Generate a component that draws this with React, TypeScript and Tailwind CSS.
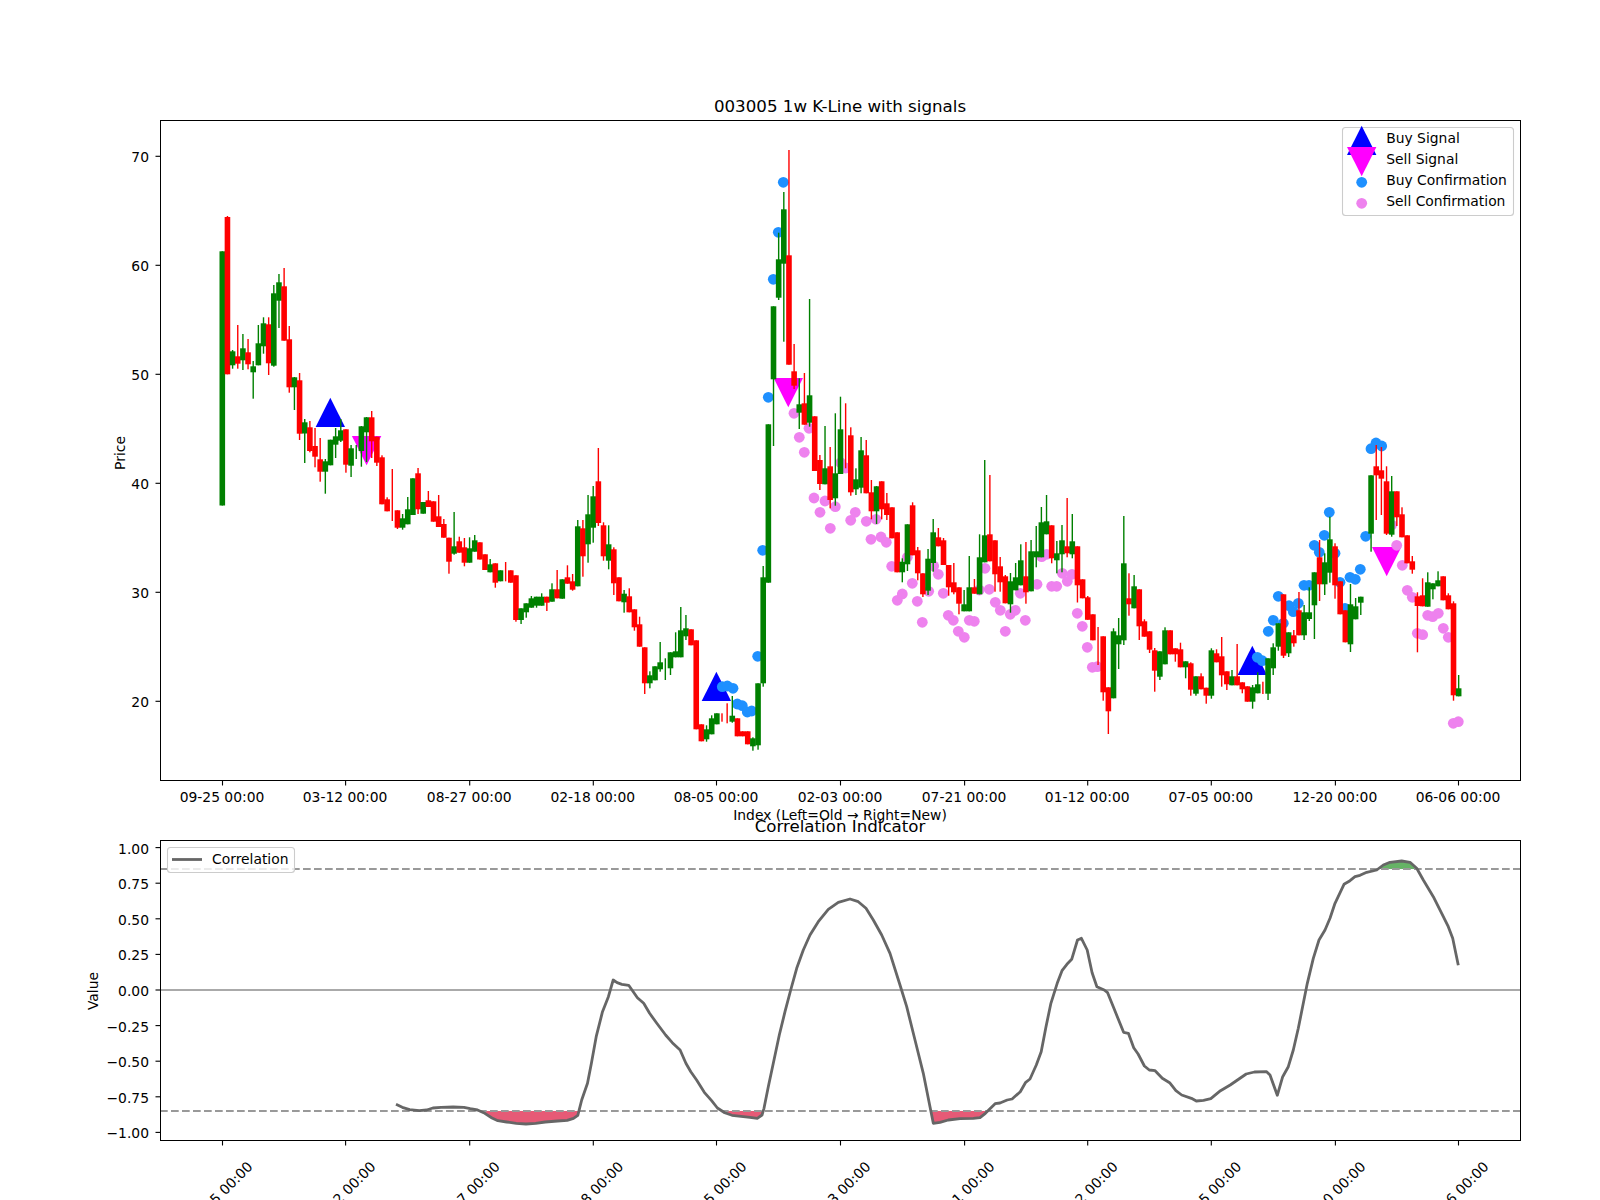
import React from "react";

type C = ["g" | "r", number, number, number?, number?] | null;

const candles: C[] = [
  ["g",251.3,505.5],["r",217,374.3,216,374.3],["g",351.3,365.3,350,368.7],["r",356.3,363.7,325,368.7],["g",348.3,360.3,334,370],
  ["r",352.3,364.3,339,369.3],["g",366.3,372.3,361,398.7],["g",343.3,365.3,325,365.3],["g",323.3,346.3,317.3,353.7],["r",324.3,363.3,317.3,375],
  ["g",293.3,365.7,285,366.7],["g",282.3,300.7,274,328],["r",286.3,340.7,268,340.7],["r",339.3,387.3,326,392.7],["g",377.3,387.3,377,410],
  ["r",380.3,433.7,373,440],["g",422.3,433.5,419,463],["r",427.3,451,421,452.3],["r",446,456.7,428,467.3],["r",459.3,471.7,438,481.7],
  ["g",461.3,471.7,459,493.7],["g",439.7,465.3],["g",436.3,444.7,428,458],["g",430.3,440.7,419,442],["r",429.3,464.7,429.3,472.7],
  ["g",448.3,465.7,445,477],["g",450,450,445,459],["g",426.3,451,426,466.7],["g",417.3,432.3,417,462],["r",417.3,441.3,411,458],
  ["r",436.7,462.7,436.7,466],["r",457.3,504.3,455.3,504.3],["r",499.3,511.3,497.3,511.3],["r",500,500,469,521],["r",510.3,527.7,510.3,529],
  ["g",518.3,527.7,514,529.7],["g",509.3,524.3,497,524.3],["g",478.3,515],["r",473.3,509.3,468,514],["g",502,513.7],
  ["r",500.3,507,491,507],["r",501.3,521.7],["r",516.3,527,495,527],["r",524,537.7,519,537.7],["r",537.7,561.7,537.7,573.7],
  ["g",546.3,553.7,512,554.7],["r",541.3,552.7,536.7,552.7],["r",547.3,562.7,538,566.3],["g",548.3,562.7,537.3,562.7],["g",540.3,551.7,535,551.7],
  ["r",542.3,559.5],["r",554.3,570],["g",564.3,572.3,559,572.3],["r",563.3,582.7,563.3,587.7],["g",570.3,581.3],
  ["r",570,570,562,581.3],["r",570.3,582.7],["r",575.3,620,575.3,621.7],["g",608.3,620,608.3,624],["g",603.3,612.3,603.3,617.7],
  ["g",598.3,607.7,596,607.7],["g",596.7,605.7,596.7,607.7],["g",596.7,605.7,593.3,605.7],["r",596.7,602.7,596.7,611],["g",589.3,601.7,583.3,601.7],
  ["r",589.3,598.3,570,598.3],["g",579.3,598.7],["r",577.3,583.7,565.3,583.7],["r",581.3,589.7,574,590.7],["g",526.3,586.3,520,586.3],
  ["r",528.3,556.3,520,576.7],["g",514.3,544.3,495,562.7],["g",496.3,527.7,486,542.7],["r",481.3,523,448,526],["r",525.3,556.3,522.3,560.7],
  ["g",544.3,560.7,525.3,569.3],["r",549.3,583.3,547.3,595],["r",577.3,601.3],["g",593.7,602.3,590,612.7],["r",596.3,612.3,588.3,612.3],
  ["r",609.3,627.3,609.3,630.7],["r",624.3,646.7,616.7,646.7],["r",647.3,683.3,647.3,694],["g",675.3,683.3,671.3,688.3],["g",666.3,680.3],
  ["g",662.3,669.3,642,671.7],["g",670,670,658.3,680],["g",652.3,668.3,652.3,675],["g",651.3,657.3,632.3,657.3],["g",630.3,657.3,607,657.3],
  ["g",628.3,636.3,615,640],["r",629.3,645.3],["r",640.3,729.3],["r",724.3,741.3],["g",729.3,739.3,725.3,741.7],
  ["g",718.3,734.3,715.3,734.3],["g",713.3,724.3],["r",717,717,713.3,721.7],["r",713,713,703.3,723.3],["g",715.7,721.7,696,722.7],
  ["r",718.3,736.3],["r",731.3,736.3],["r",731.3,744.3],["g",738.3,746.3,737.3,750.7],["g",683.3,745.3,683.3,749.7],
  ["g",577.3,683.3,566,686.7],["g",424.3,582.7],["g",306.3,379.3,306.3,446],["g",259.3,297.7,232.7,300],["g",209.3,263.7,192,341.7],
  ["r",255.3,364.7,150,364.7],["r",371.3,385.7,344,389],["g",404.3,412.7,378.3,429],["r",403.3,424.7,373,424.7],["g",395.3,422.7,299,426.7],
  ["r",416.3,471],["r",460,484,455,490],["g",468.3,484.3,426,484.3],["r",466.3,500,447,508.3],["g",473.3,498.3,413.3,505.7],
  ["g",429.3,474,396.7,474],["r",440,440,403.3,468.3],["r",435.3,492.3,427.3,495.7],["g",479.3,489.3,468.3,495],["g",450.3,487.7,437,493.3],
  ["r",455.3,493.3,440,493.3],["r",492.3,511.3,480,519.3],["g",486.3,511.3,486,524],["r",481.3,509.3,481.3,519.3],["r",503.3,515,493,520],
  ["r",507.3,538.3],["r",532.3,572.3],["g",561.7,572.3,558.3,582.3],["g",524.3,564.3,524.3,571],["r",505.3,555.3,502.3,555.3],
  ["r",550.3,573.3,547,580.3],["r",573.3,594.3,573.3,597],["g",558.7,590.7,549,595],["g",532.3,563,519,571.7],["r",537.3,546.3,528,546.3],
  ["r",540.3,565,538,565],["r",565,587.3,565,595.7],["r",582.3,592.3,563,594.3],["r",587.3,603.7,587.3,614.3],["g",604.3,611.3,590,611.3],
  ["g",587.3,611.3,556,611.3],["r",587.3,593.7,579,593.7],["g",557.3,594.3,534.3,594.3],["g",535.3,562.3,460,562.3],["r",534.3,561.3,475,561.3],
  ["r",540.3,574.3,540.3,591.7],["r",566.3,582.3,557,591.7],["r",576.3,603.3,575,603.3],["g",581.3,604.3,573,612.7],["g",577.3,590.3,563,590.3],
  ["g",560.3,585.3,544.3,585.3],["r",576.3,592.3,542,603.7],["g",551.3,591.3,540,591.3],["g",551.3,557.3,526,567.3],["g",522.3,557.3,507,557.3],
  ["g",521.3,534.3,495,534.3],["r",525.3,558.3,525.3,563.3],["g",553.3,560.3,541,573.3],["g",540.3,554.3,525,572.3],["r",546.3,553.3,498,557.3],
  ["g",541.3,554.3,514,558.3],["r",546.3,585.3,546.3,602.5],["r",579.3,598.3],["r",597.3,619.8,596,619.8],["r",614.3,640.3],
  ["r",640,640,627,665],["r",636.3,692.3,636.3,700.7],["r",687.3,711.3,687.3,734],["g",631.3,698.3,628.3,698.3],["g",635.3,644.3,618,669],
  ["g",563.3,640.3,516,645],["r",598.3,604.3,573.3,615.7],["g",586.3,608.3,575,608.3],["r",589.3,626.3,589.3,640],["r",621.3,636.7,619.3,636.7],
  ["r",631.3,649.7,631.3,653],["r",650.3,670.7,648,691.7],["g",651.3,676.7,651.3,680],["g",630.3,664.3,627.3,664.3],["r",630.3,654.3],
  ["r",648.3,654.3,648.3,661.7],["r",649.3,667.3,642.7,667.3],["g",661.3,667.3,661.3,678.3],["r",663.3,689.7,662.3,695.7],["g",676.3,693.7,676.3,695.7],
  ["r",676.3,689.3,673.3,689.3],["r",687.7,695.7,687.7,703.7],["g",650.3,695.7,648.3,698.7],["r",653.3,662.3,649.3,662.3],["r",656.3,675.3,637,686.7],
  ["r",671.3,684.3,671.3,690],["g",676.3,685.3,670,685.3],["r",676.3,685.3,644,685.3],["r",682.3,689.3,682.3,693.3],["r",686.3,701.7],
  ["g",687.3,701.7,685,708.7],["g",684.3,693.3,672.3,693.3],["r",688,688,681.7,694],["g",658.3,693.7,658.3,700],["g",647.3,668.3,643.3,675],
  ["g",623.3,646.7,623.3,650.7],["r",594.3,655.7,594.3,658],["g",632.3,653.3,632.3,657],["r",635.3,643.3,630,646.7],["r",610.3,635.3,592,635.3],
  ["g",612.3,635.3,605,640],["g",612.3,619,587.3,621],["g",572.3,605.3,572.3,639],["r",557.3,584.3,540,601],["g",562.3,584.3,553.3,595],
  ["g",539.3,572.7,516.7,582.7],["r",546.3,585.3,543.3,598.7],["r",581.3,614.3],["r",610.3,642.3],["g",604.3,644.3,584,652],
  ["g",606.3,619.3,598,619.3],["g",596.7,602.7,596.7,615],null,["g",475.3,533.7,475.3,551.7],["r",466.3,475.3,445,520],
  ["r",470.3,478.7,447,515],["r",481.3,533.7,466.3,535],["g",491.3,534.7,476,536.7],["r",491.3,517.3,491.3,526],["r",514.3,537.3,507.3,537.3],
  ["r",535.3,563.3],["r",561.3,569.7,556,573.7],["r",596.3,606,592.3,652.3],["r",595.3,606.3,578.3,606.3],["g",582.3,606.7,572.3,606.7],
  ["g",583.3,589.3,583.3,599.3],["g",580.3,586.3,571.3,586.3],["r",576.3,600.3],["r",595.3,609.3,593.3,609.3],["r",603.3,695.3,601.3,700.7],
  ["g",688.3,696.3,675,696.3],
];

const blue: [number, number][] = [
  [757.7,656.3],[762.7,550.3],[722.3,686.7],[727.3,686],[733,688.3],[737.3,704],[742.3,705.7],[747.3,712],[751.7,711],[768.3,397.3],
  [773.3,279.3],[778.3,232.3],[783.3,182.3],[1257.3,657.3],[1262.3,660.7],[1268.3,631.3],[1273.3,620.3],[1278.3,596.3],[1283.3,623.3],
  [1289,605.7],[1293.3,611.7],[1298.3,603.3],[1304,585.3],[1309,585.3],[1314.3,545.3],[1319.3,552.3],[1324.3,535.3],[1329.3,512.3],
  [1335,553.3],[1340,582.3],[1345,608.3],[1350,577.3],[1355.3,579.3],[1360.3,569.3],[1365.7,536.3],[1371,448.7],[1376,443],[1381.7,446],
];

const violet: [number, number][] = [
  [794,413.3],[799.3,437.3],[804.3,452.3],[809,428.3],[814,498],[820,512.3],[825,501],[830.3,528.3],[835.3,506.7],[840.7,462.7],[845.7,468],
  [850.7,520.3],[855.3,512.3],[866.3,521.3],[871,539.3],[876,519.3],[881,537],[886.3,542.3],[891.7,566.3],[897.3,600.3],[902.3,594],
  [907.3,557.3],[912.3,583.3],[917.3,601.3],[922.3,622.3],[928.7,591.3],[933.7,566],[938.3,574.3],[943.3,593.3],[948.3,615.3],[953.3,620.3],
  [958.3,631.3],[964.3,637.3],[969.3,620.3],[974.3,621.3],[979.3,590],[985,568.3],[989.3,589.3],[995.3,602.3],[1000.3,610.3],[1005.3,631.3],
  [1010.3,614.3],[1015.3,610.3],[1020.3,593.3],[1025.3,620.3],[1037,584.3],[1041.7,556.7],[1046.7,554.3],[1051.7,586.3],[1056.7,586.3],
  [1062.3,573.3],[1067.3,581.3],[1072,574.3],[1077.3,613.3],[1082.3,626.3],[1087.3,647.3],[1092.3,667.3],[1097.3,666.7],
  [1391.7,525],[1396.7,545.3],[1402.3,565.3],[1407.3,590.3],[1412.3,597.3],[1417.3,633.3],[1422.7,634.7],[1427.7,615.3],[1432.7,616.7],
  [1438.3,613.3],[1443.3,628.3],[1448.3,637.3],[1453.3,723.3],[1458.3,721.7],
];

const zoomA: [number, number][] = [
  [652,1003],[665,1012],[680,1019],[700,1022],[715,1020],[728,1014],[745,1012],[770,1011],[792,1012],[805,1016],[820,1020],[835,1030],[850,1044],
  [862,1052],[880,1056],[900,1060],[920,1062],[940,1060],[960,1056],[985,1053],[1005,1051],[1018,1045],[1027,1036],[1035,990],[1047,940],[1055,880],
  [1065,800],[1078,725],[1090,680],[1100,630],[1108,638],[1118,643],[1132,646],[1150,683],[1163,700],[1175,730],[1190,760],[1208,795],[1222,818],
  [1238,840],[1250,880],[1260,905],[1272,930],[1288,967],[1303,992],[1315,1014],[1330,1028],[1345,1036],
];
const cropMid: [number, number][] = [
  [30,742],[52,745],[66,735],[72,715],[85,650],[100,580],[118,495],[135,425],[152,360],[170,295],[190,240],[210,195],[235,155],[265,118],[295,97],
  [330,87],[355,95],[378,115],[400,150],[425,195],[450,250],[480,345],[500,410],[525,510],[550,610],[570,710],[580,760],[600,757],[625,750],[660,746],[700,745],[720,743],
];
const zoomB: [number, number][] = [
  [300,1030],[320,1001],[330,999],[345,990],[355,987],[372,965],[383,937],[392,927],[405,885],[415,845],
  [425,770],[435,700],[448,640],[458,602],[468,583],[478,568],[490,510],[498,505],[510,540],[520,608],[530,650],[545,660],[552,668],[565,715],[585,787],
  [595,790],[606,833],[615,852],[628,888],[638,900],[650,902],[665,925],[680,938],[693,962],[705,975],[725,985],[735,993],[750,991],[765,986],[785,962],
  [805,945],[838,912],[855,906],[880,905],
];
const cropEnd: [number, number][] = [
  [0,645],[22,706],[38,650],[55,620],[70,570],[85,505],[100,430],[112,370],[130,295],[147,240],[165,210],[180,175],[195,130],[222,73],[240,62],[255,50],
  [270,46],[290,37],[320,30],[340,15],[360,7],[395,3],[420,7],[440,25],[460,60],[490,110],[515,160],[535,200],[548,235],[565,316],
];

const curve = [
  ...zoomA.map(([x, y]) => [80 + x / 2.063, 770 + y / 3]),
  ...cropMid.map(([x, y]) => [740 + x / 3, 870 + y / 3]),
  ...zoomB.map(([x, y]) => [840 + x / 2.063, 770 + y / 3]),
  ...cropEnd.map(([x, y]) => [1270 + x / 3, 860 + y / 3]),
];
const linePts = curve.map(([x, y]) => `${x.toFixed(1)},${y.toFixed(1)}`).join(" ");
const firstX = curve[0][0].toFixed(1);
const lastX = curve[curve.length - 1][0].toFixed(1);

const xAt = (i: number) => 222.3 + 5.1515 * i;
const ticksX = [222.5, 345.6, 469.7, 593.3, 716.5, 840.5, 964.6, 1087.7, 1211.3, 1335.4, 1458.5];
const labelsX = ["09-25 00:00","03-12 00:00","08-27 00:00","02-18 00:00","08-05 00:00","02-03 00:00","07-21 00:00","01-12 00:00","07-05 00:00","12-20 00:00","06-06 00:00"];
const ticksY: [string, number][] = [["70",156.3],["60",265.3],["50",374.3],["40",483.3],["30",592.3],["20",701.3]];
const ticksV: [string, number][] = [["1.00",847.6],["0.75",883.2],["0.50",918.8],["0.25",954.4],["0.00",990],["\u22120.25",1025.6],["\u22120.50",1061.2],["\u22120.75",1096.8],["\u22121.00",1132.4]];

const up = (x: number, base: number) => `${x - 14.7},${base} ${x},${base - 29.3} ${x + 14.7},${base}`;
const down = (x: number, top: number) => `${x - 14.7},${top} ${x + 14.7},${top} ${x},${top + 29.3}`;

export default function App() {
  return (
    <div className="w-[1600px] h-[1200px] bg-white overflow-hidden font-['DejaVu_Sans',sans-serif]">
      <svg width="1600" height="1200" viewBox="0 0 1600 1200" className="text-[13.89px]" fill="#000">
        <defs>
          <clipPath id="redClip"><rect x="160" y="1111" width="1360" height="29" /></clipPath>
          <clipPath id="greenClip"><rect x="160" y="840" width="1360" height="29" /></clipPath>
        </defs>

        {/* Price panel */}
        <polygon points={up(330.3, 427)} fill="#0000ff" />
        <polygon points={up(716.4, 701)} fill="#0000ff" />
        <polygon points={up(1252.3, 675)} fill="#0000ff" />
        <polygon points={down(366.6, 436)} fill="#ff00ff" />
        <polygon points={down(788.3, 378)} fill="#ff00ff" />
        <polygon points={down(1386.7, 547)} fill="#ff00ff" />
        {blue.map(([x, y], k) => <circle key={k} cx={x} cy={y} r="5.4" fill="#1e90ff" />)}
        {violet.map(([x, y], k) => <circle key={k} cx={x} cy={y} r="5.4" fill="#ee82ee" />)}
        {candles.map((c, i) => {
          if (!c) return null;
          const col = c[0] === "g" ? "#008000" : "#ff0000";
          const x = xAt(i);
          return (
            <g key={i} fill={col}>
              <rect x={x - 0.7} y={c[3] ?? c[1]} width="1.4" height={(c[4] ?? c[2]) - (c[3] ?? c[1])} />
              {c[2] > c[1] && <rect x={x - 2.8} y={c[1]} width="5.6" height={c[2] - c[1]} />}
            </g>
          );
        })}
        <rect x="160.5" y="120.5" width="1360" height="660" fill="none" stroke="#000" strokeWidth="1.11" shapeRendering="crispEdges" />
        {ticksX.map((x) => <line key={x} x1={x} x2={x} y1="781" y2="785.5" stroke="#000" strokeWidth="1.11" />)}
        {labelsX.map((t, k) => <text key={t} x={ticksX[k] - 0.5} y="802" textAnchor="middle">{t}</text>)}
        {ticksY.map(([t, y]) => (
          <g key={t}>
            <line x1="155.5" x2="160" y1={y} y2={y} stroke="#000" strokeWidth="1.11" />
            <text x="149" y={y + 6} textAnchor="end">{t}</text>
          </g>
        ))}
        <text x="840" y="112" textAnchor="middle" className="text-[16.67px]">003005 1w K-Line with signals</text>
        <text x="840" y="820" textAnchor="middle">Index (Left=Old → Right=New)</text>
        <text transform="translate(125 453) rotate(-90)" textAnchor="middle">Price</text>

        {/* Price legend */}
        <rect x="1342.5" y="127.5" width="171" height="88" rx="3" fill="#fff" fillOpacity="0.8" stroke="#cccccc" strokeWidth="1.1" />
        <polygon points={up(1361.7, 155)} fill="#0000ff" />
        <polygon points={down(1361.7, 147)} fill="#ff00ff" />
        <circle cx="1361.7" cy="182.3" r="5.4" fill="#1e90ff" />
        <circle cx="1361.7" cy="203.3" r="5.4" fill="#ee82ee" />
        <text x="1386.2" y="143">Buy Signal</text>
        <text x="1386.2" y="164">Sell Signal</text>
        <text x="1386.2" y="185">Buy Confirmation</text>
        <text x="1386.2" y="206">Sell Confirmation</text>

        {/* Correlation panel */}
        <polygon points={`${firstX},1111 ${linePts} ${lastX},1111`} fill="#e65a76" clipPath="url(#redClip)" />
        <polygon points={`${firstX},869 ${linePts} ${lastX},869`} fill="#66b366" clipPath="url(#greenClip)" />
        <line x1="160" x2="1520" y1="990" y2="990" stroke="#aaaaaa" strokeWidth="2" />
        <line x1="160" x2="1520" y1="869" y2="869" stroke="#999999" strokeWidth="2.08" strokeDasharray="7.7 3.3" />
        <line x1="160" x2="1520" y1="1111" y2="1111" stroke="#999999" strokeWidth="2.08" strokeDasharray="7.7 3.3" />
        <polyline points={linePts} fill="none" stroke="#666666" strokeWidth="2.8" strokeLinejoin="round" />
        <rect x="160.5" y="840.5" width="1360" height="300" fill="none" stroke="#000" strokeWidth="1.11" shapeRendering="crispEdges" />
        {ticksX.map((x) => <line key={x} x1={x} x2={x} y1="1141" y2="1145.5" stroke="#000" strokeWidth="1.11" />)}
        {labelsX.map((t, k) => (
          <text key={t} transform={`translate(${ticksX[k] - 2.5} 1194) rotate(-45)`} y="5" textAnchor="middle">{t}</text>
        ))}
        {ticksV.map(([t, y]) => (
          <g key={t}>
            <line x1="155.5" x2="160" y1={y} y2={y} stroke="#000" strokeWidth="1.11" />
            <text x="149" y={y + 6} textAnchor="end">{t}</text>
          </g>
        ))}
        <text x="840" y="832" textAnchor="middle" className="text-[16.67px]">Correlation Indicator</text>
        <text transform="translate(98 991) rotate(-90)" textAnchor="middle">Value</text>

        {/* Correlation legend */}
        <rect x="167.5" y="847.5" width="127" height="25" rx="3" fill="#fff" fillOpacity="0.8" stroke="#cccccc" strokeWidth="1.1" />
        <line x1="172" x2="202" y1="859.5" y2="859.5" stroke="#666666" strokeWidth="2.8" />
        <text x="212" y="864">Correlation</text>
      </svg>
    </div>
  );
}
